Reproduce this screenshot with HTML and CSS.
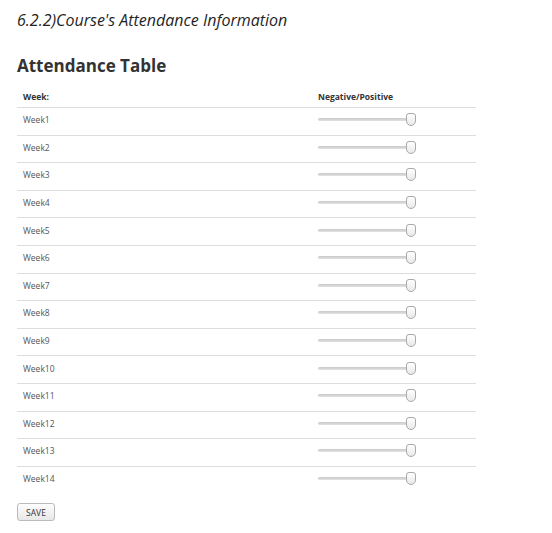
FILE: index.html
```html
<!DOCTYPE html>
<html>
<head>
<meta charset="utf-8">
<link rel="stylesheet" href="styles.css">
</head>
<body>
<div class="page">
  <h2 class="section-title">6.2.2)Course's Attendance Information</h2>
  <h3 class="table-title">Attendance Table</h3>
  <table class="att">
    <thead>
      <tr><th class="c-week">Week:</th><th class="c-val">Negative/Positive</th></tr>
    </thead>
    <tbody>
      <tr><td>Week1</td><td><input class="slider" type="range" min="0" max="1" value="1"></td></tr>
      <tr><td>Week2</td><td><input class="slider" type="range" min="0" max="1" value="1"></td></tr>
      <tr><td>Week3</td><td><input class="slider" type="range" min="0" max="1" value="1"></td></tr>
      <tr><td>Week4</td><td><input class="slider" type="range" min="0" max="1" value="1"></td></tr>
      <tr><td>Week5</td><td><input class="slider" type="range" min="0" max="1" value="1"></td></tr>
      <tr><td>Week6</td><td><input class="slider" type="range" min="0" max="1" value="1"></td></tr>
      <tr><td>Week7</td><td><input class="slider" type="range" min="0" max="1" value="1"></td></tr>
      <tr><td>Week8</td><td><input class="slider" type="range" min="0" max="1" value="1"></td></tr>
      <tr><td>Week9</td><td><input class="slider" type="range" min="0" max="1" value="1"></td></tr>
      <tr><td>Week10</td><td><input class="slider" type="range" min="0" max="1" value="1"></td></tr>
      <tr><td>Week11</td><td><input class="slider" type="range" min="0" max="1" value="1"></td></tr>
      <tr><td>Week12</td><td><input class="slider" type="range" min="0" max="1" value="1"></td></tr>
      <tr><td>Week13</td><td><input class="slider" type="range" min="0" max="1" value="1"></td></tr>
      <tr><td>Week14</td><td><input class="slider" type="range" min="0" max="1" value="1"></td></tr>
    </tbody>
  </table>
  <button class="save" type="button">SAVE</button>
</div>
</body>
</html>
```
FILE: styles.css
```css
html, body {
  margin: 0;
  padding: 0;
  background: #fff;
}
body {
  font-family: "Open Sans", "Noto Sans", sans-serif;
  color: #333;
}
.page {
  padding: 8px 17px 0 17px;
}
.section-title {
  margin: 0;
  font-size: 16px;
  font-style: italic;
  font-weight: normal;
  line-height: 24px;
  color: #1f1f1f;
}
.table-title {
  margin: 22px 0 0 0;
  font-size: 17px;
  font-weight: bold;
  line-height: 24px;
  color: #333;
}
.att {
  margin-top: 9px;
  width: 459px;
  border-collapse: collapse;
  font-size: 8.5px;
}
.att th {
  text-align: left;
  font-weight: bold;
  color: #333;
  padding: 4px 6px 5px 6px;
  height: 10px;
  border-bottom: 1px solid #ddd;
}
.att td {
  color: #555;
  padding: 0 6px 3px 6px;
  height: 23.6px;
  border-bottom: 1px solid #ddd;
  vertical-align: middle;
}
.att tbody tr:last-child td {
  border-bottom: none;
}
.c-week { width: 283px; }
.slider {
  -webkit-appearance: none;
  appearance: none;
  width: 98px;
  height: 14px;
  margin: 0;
  padding: 0;
  background: transparent;
  display: block;
}
.slider::-webkit-slider-runnable-track {
  height: 3px;
  background: linear-gradient(#c9c9c9, #e2e2e2);
  border-radius: 2px;
  border: none;
}
.slider::-webkit-slider-thumb {
  -webkit-appearance: none;
  appearance: none;
  width: 10px;
  height: 13px;
  margin-top: -5px;
  background: linear-gradient(#ffffff, #e9e9e9);
  border: 1px solid #a9a9a9;
  border-radius: 3px 3px 5px 5px;
  box-sizing: border-box;
}
.save {
  display: block;
  margin-top: 10px;
  font-family: "Open Sans", "Noto Sans", sans-serif;
  font-size: 8.5px;
  color: #333;
  height: 18px;
  width: 38px;
  padding: 0;
  border: 1px solid #bbb;
  border-radius: 3px;
  background: linear-gradient(#fdfdfd, #e8e8e8);
}
```
